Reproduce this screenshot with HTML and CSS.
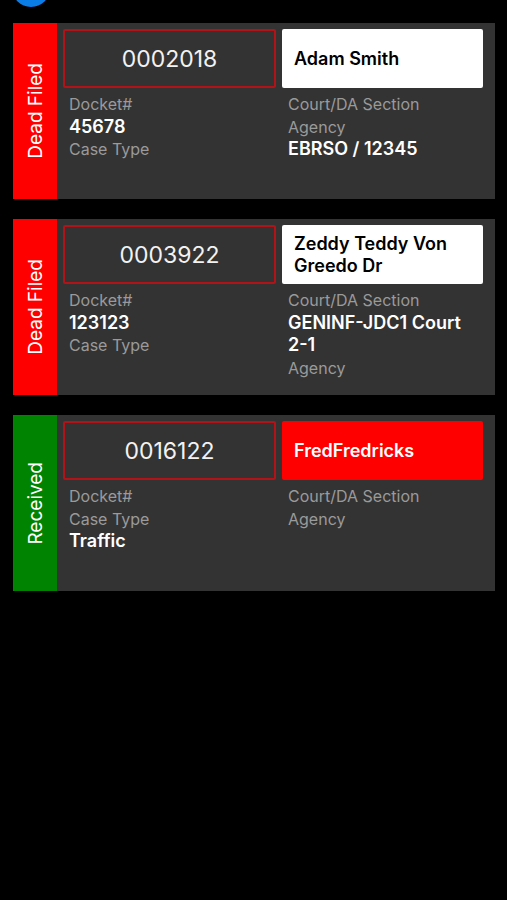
FILE: index.html
```html
<!DOCTYPE html>
<html lang="en">
<head>
  <meta charset="UTF-8">
  <title>Cases</title>
  <link rel="stylesheet" href="styles.css">
</head>
<body>
  <div class="fab"></div>

  <div class="lista">
    <div class="card">
      <div class="estado rojo"><span>Dead Filed</span></div>
      <div class="contenido">
        <div class="numero">0002018</div>
        <div class="nombre">Adam Smith</div>
        <div class="campos">
          <div class="etiqueta">Docket#</div>
          <div class="valor">45678</div>
          <div class="etiqueta">Case Type</div>
        </div>
        <div class="campos">
          <div class="etiqueta">Court/DA Section</div>
          <div class="etiqueta">Agency</div>
          <div class="valor">EBRSO / 12345</div>
        </div>
      </div>
    </div>

    <div class="card">
      <div class="estado rojo"><span>Dead Filed</span></div>
      <div class="contenido">
        <div class="numero">0003922</div>
        <div class="nombre">Zeddy Teddy Von Greedo Dr</div>
        <div class="campos">
          <div class="etiqueta">Docket#</div>
          <div class="valor">123123</div>
          <div class="etiqueta">Case Type</div>
        </div>
        <div class="campos">
          <div class="etiqueta">Court/DA Section</div>
          <div class="valor">GENINF-JDC1 Court <span class="junto">2-1</span></div>
          <div class="etiqueta">Agency</div>
        </div>
      </div>
    </div>

    <div class="card">
      <div class="estado verde"><span>Received</span></div>
      <div class="contenido">
        <div class="numero">0016122</div>
        <div class="nombre alerta">FredFredricks</div>
        <div class="campos">
          <div class="etiqueta">Docket#</div>
          <div class="etiqueta">Case Type</div>
          <div class="valor">Traffic</div>
        </div>
        <div class="campos">
          <div class="etiqueta">Court/DA Section</div>
          <div class="etiqueta">Agency</div>
        </div>
      </div>
    </div>
  </div>
</body>
</html>
```

FILE: styles.css
```css
body {
  margin: 0;
  padding: 0;
  height: 900px;
  overflow: hidden;
  background: #000;
  font-family: 'Inter', 'Liberation Sans', sans-serif;
  color: white;
}

.fab {
  width: 38px;
  height: 38px;
  margin: -31px 0 0 12px;
  border-radius: 50%;
  background: #0a7de6;
}

.lista {
  display: flex;
  flex-direction: column;
  gap: 20px;
  margin: 16px 0 0 13px;
  width: 482px;
}

.card {
  display: flex;
  height: 176px;
  background: #333333;
}

.estado {
  width: 44px;
  flex-shrink: 0;
  display: flex;
  align-items: center;
  justify-content: center;
}

.estado span {
  writing-mode: vertical-rl;
  transform: rotate(180deg);
  font-size: 19px;
  white-space: nowrap;
}

.rojo {
  background: #ff0000;
}

.verde {
  background: #008300;
}

.contenido {
  flex: 1;
  display: grid;
  grid-template-columns: 213px 201px;
  grid-template-rows: 59px auto;
  column-gap: 6px;
  row-gap: 5px;
  padding: 6px 12px 0 6px;
  align-content: start;
}

.numero {
  border: 2px solid #b01418;
  border-radius: 2px;
  display: flex;
  align-items: center;
  justify-content: center;
  font-size: 23px;
  color: #f2f2f2;
}

.nombre {
  background: #fff;
  color: #000;
  border-radius: 2px;
  display: flex;
  align-items: center;
  padding: 0 12px;
  font-size: 18px;
  font-weight: 600;
  line-height: 22px;
}

.alerta {
  background: #ff0000;
  color: #fff;
}

.campos {
  padding: 0 6px;
  line-height: 22.5px;
}

.etiqueta {
  font-size: 16px;
  color: #9a9a9a;
}

.valor {
  font-size: 18px;
  font-weight: 600;
  color: #fff;
}

.junto {
  white-space: nowrap;
}
```
